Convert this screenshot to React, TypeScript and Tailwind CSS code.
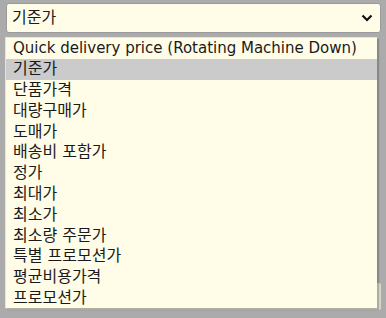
import React from 'react'

const options = [
  'Quick delivery price (Rotating Machine Down)',
  '기준가',
  '단품가격',
  '대량구매가',
  '도매가',
  '배송비 포함가',
  '정가',
  '최대가',
  '최소가',
  '최소량 주문가',
  '특별 프로모션가',
  '평균비용가격',
  '프로모션가',
]

const font = { fontFamily: '"DejaVu Sans", "Noto Sans CJK KR", sans-serif' }

export default function App() {
  const selected = '기준가'

  return (
    <div className="relative h-[318px] w-[386px] bg-[#ababab] pt-[3px] pl-[6px] pr-[5px]" style={font}>
      {/* closed select */}
      <div className="flex h-[30px] items-center justify-between rounded-[3px] border border-[#9a9a9a] bg-[#fffde8] pl-[5px] pr-[6px] text-[16px] text-[#1a1a1a]">
        <span>{selected}</span>
        <svg width="12" height="8" viewBox="0 0 12 8" className="mr-[1px]">
          <path d="M1.5 1.5 L6 6 L10.5 1.5" fill="none" stroke="#111" strokeWidth="2.2" />
        </svg>
      </div>

      {/* field behind the open list */}
      <div className="mt-[250px] h-[27px] rounded-[2px] bg-[#d9d8c6]" />

      {/* open list */}
      <ul className="absolute left-[5px] top-[37px] w-[372px] border-l border-t border-[#e8e6d0] bg-[#fffde8] text-[#1a1a1a] shadow-[2px_2px_1px_rgba(0,0,0,0.2)]">
        {options.map((o, i) => (
          <li
            key={o}
            className={`flex h-[20.8px] items-center whitespace-nowrap pl-[7px] leading-none ${
              i === 0 ? 'text-[15px]' : 'text-[16px]'
            } ${o === selected ? 'bg-[#cbcbcb]' : ''}`}
          >
            {o}
          </li>
        ))}
      </ul>
    </div>
  )
}
